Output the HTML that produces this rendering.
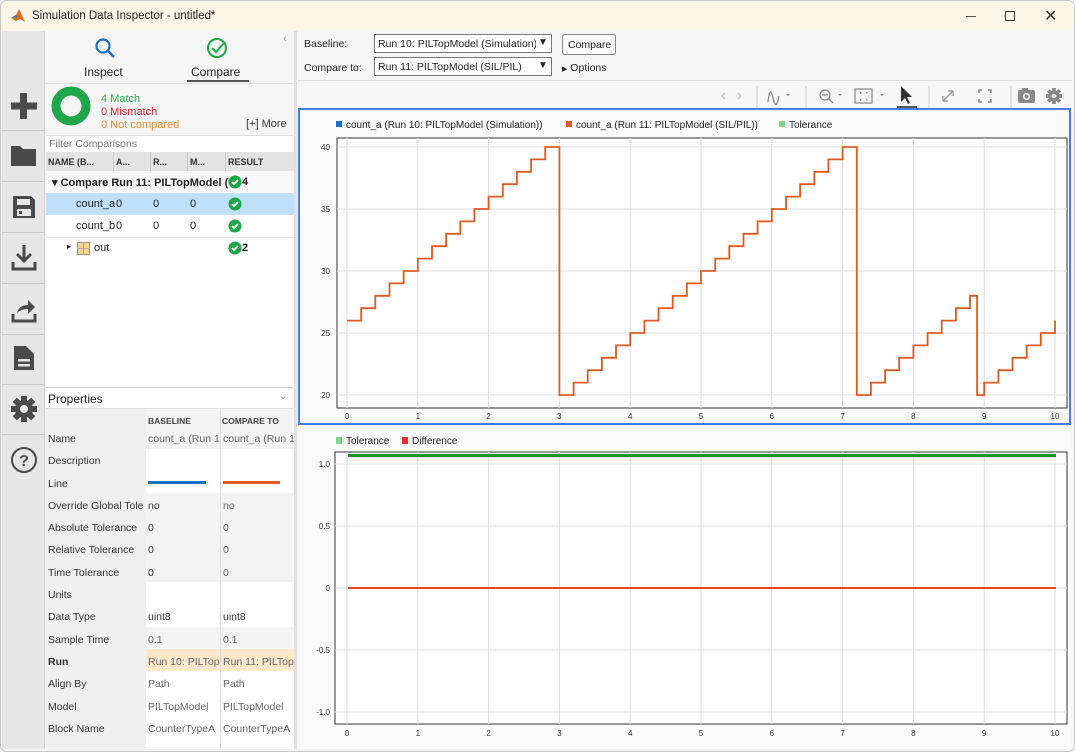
<!DOCTYPE html>
<html><head><meta charset="utf-8"><style>
*{margin:0;padding:0;box-sizing:border-box}
body{width:1075px;height:752px;overflow:hidden;background:#fff;font-family:"Liberation Sans",sans-serif;font-size:11px;color:#222;position:relative}
.a{position:absolute}
.t{position:absolute;white-space:nowrap}
</style></head><body>
<div class="a" style="left:0;top:0;width:1075px;height:752px;background:#f5f5f5;border:1px solid #c8c8c8;border-radius:6px"></div>
<div class="a" style="left:1px;top:1px;width:1073px;height:30px;background:#fbf7e8;border-radius:6px 6px 0 0"></div>
<svg class="a" style="left:10px;top:8px" width="16" height="16" viewBox="0 0 16 16"><path d="M1 10 L6 7 L9 1 L15 14 L10 11 L6 13Z" fill="#e26a1b"/><path d="M1 10 L6 7 L8 9Z" fill="#2e7cc0"/></svg>
<div class="t" style="left:32px;top:10px;font-size:11.5px;color:#222">Simulation Data Inspector - untitled*</div>
<div class="a" style="left:966px;top:16px;width:10px;height:1px;background:#555"></div>
<div class="a" style="left:1005px;top:11px;width:10px;height:10px;border:1.3px solid #333;border-radius:1px"></div>
<div class="t" style="left:1044px;top:6px;font-size:16px;color:#333">✕</div>

<div class="a" style="left:2px;top:31px;width:43px;height:718px;background:#e6e6e6;border-right:1px solid #d0d0d0"></div>
<div class="a" style="left:2px;top:130px;width:43px;height:1px;background:#c8c8c8"></div>
<div class="a" style="left:2px;top:181px;width:43px;height:1px;background:#c8c8c8"></div>
<div class="a" style="left:2px;top:232px;width:43px;height:1px;background:#c8c8c8"></div>
<div class="a" style="left:2px;top:283px;width:43px;height:1px;background:#c8c8c8"></div>
<div class="a" style="left:2px;top:334px;width:43px;height:1px;background:#c8c8c8"></div>
<div class="a" style="left:2px;top:384px;width:43px;height:1px;background:#c8c8c8"></div>
<div class="a" style="left:2px;top:434px;width:43px;height:1px;background:#c8c8c8"></div>
<svg class="a" style="left:9px;top:91px" width="30" height="30"><rect x="11" y="2" width="7" height="26" fill="#4a4a4a"/><rect x="2" y="11.5" width="26" height="7" fill="#4a4a4a"/></svg>
<svg class="a" style="left:9px;top:142px" width="30" height="26"><path d="M2 4 h9 l3 3 h13 v17 h-25z" fill="#4a4a4a"/></svg>
<svg class="a" style="left:11px;top:194px" width="26" height="26"><path d="M2 2 h18 l4 4 v18 h-22z" fill="#4a4a4a"/><rect x="6" y="5" width="13" height="6" fill="#e6e6e6"/><rect x="6" y="15" width="14" height="7" fill="#e6e6e6"/><rect x="8" y="17" width="3" height="3" fill="#4a4a4a"/></svg>
<svg class="a" style="left:10px;top:243px" width="28" height="30"><path d="M14 2 v16 M7 11 l7 7 l7 -7" stroke="#4a4a4a" stroke-width="3" fill="none"/><path d="M3 19 v7 h22 v-7" stroke="#4a4a4a" stroke-width="3" fill="none"/></svg>
<svg class="a" style="left:10px;top:295px" width="28" height="30"><path d="M7 18 q2 -8 11 -8 v-5 l7 7 l-7 7 v-5 q-7 0 -11 4z" fill="#4a4a4a"/><path d="M3 19 v7 h22 v-7" stroke="#4a4a4a" stroke-width="3" fill="none"/></svg>
<svg class="a" style="left:12px;top:344px" width="24" height="28"><path d="M2 2 h12 l8 8 v16 h-20z" fill="#4a4a4a"/><rect x="6" y="15" width="12" height="2.5" fill="#e6e6e6"/><rect x="6" y="20" width="12" height="2.5" fill="#e6e6e6"/></svg>
<svg class="a" style="left:10px;top:395px" width="28" height="28" viewBox="0 0 28 28"><g fill="#4a4a4a"><circle cx="14" cy="14" r="9"/><rect x="11" y="1" width="6" height="26"/><rect x="1" y="11" width="26" height="6"/><rect x="11" y="1" width="6" height="26" transform="rotate(45 14 14)"/><rect x="11" y="1" width="6" height="26" transform="rotate(-45 14 14)"/></g><circle cx="14" cy="14" r="4" fill="#e6e6e6"/></svg>
<svg class="a" style="left:10px;top:446px" width="28" height="28"><circle cx="14" cy="14" r="12" fill="none" stroke="#4a4a4a" stroke-width="2"/><text x="14" y="20" font-size="16" font-family="Liberation Sans" font-weight="bold" text-anchor="middle" fill="#4a4a4a">?</text></svg>

<div class="a" style="left:46px;top:31px;width:248px;height:718px;background:#f5f5f5"></div>
<svg class="a" style="left:93px;top:36px" width="24" height="24"><circle cx="10" cy="10" r="6.5" fill="none" stroke="#1a6fc0" stroke-width="2.2"/><path d="M15 15 l6 6" stroke="#1a6fc0" stroke-width="2.5"/></svg>
<svg class="a" style="left:206px;top:36px" width="24" height="24"><circle cx="11" cy="12" r="9" fill="none" stroke="#1fa64a" stroke-width="2"/><path d="M6 12 l4 4 l8 -9" fill="none" stroke="#1fa64a" stroke-width="2"/></svg>
<div class="t" style="left:84px;top:65px;font-size:12px">Inspect</div>
<div class="t" style="left:191px;top:65px;font-size:12px">Compare</div>
<div class="a" style="left:187px;top:80px;width:62px;height:2px;background:#555"></div>
<div class="t" style="left:283px;top:33px;font-size:11px;color:#999">‹</div>
<div class="a" style="left:46px;top:83px;width:248px;height:1px;background:#ddd"></div>
<svg class="a" style="left:51px;top:86px" width="40" height="40"><circle cx="20" cy="20" r="15" fill="none" stroke="#1fa64a" stroke-width="9"/></svg>
<div class="t" style="left:101px;top:93px;color:#2db34a">4 Match</div>
<div class="t" style="left:101px;top:106px;color:#f0202a">0 Mismatch</div>
<div class="t" style="left:101px;top:119px;color:#f08a30">0 Not compared</div>
<div class="t" style="left:246px;top:118px;color:#333">[+] More</div>
<div class="a" style="left:46px;top:135px;width:248px;height:17px;background:#fff;border-top:1px solid #ddd"></div>
<div class="t" style="left:49px;top:138px;color:#777;font-size:10.5px">Filter Comparisons</div>
<div class="a" style="left:46px;top:152px;width:248px;height:19px;background:#e3e3e3"></div>
<div class="t" style="left:48px;top:157px;font-size:9px;font-weight:bold;color:#333">NAME (B...</div>
<div class="t" style="left:116px;top:157px;font-size:9px;font-weight:bold;color:#333">A...</div>
<div class="t" style="left:153px;top:157px;font-size:9px;font-weight:bold;color:#333">R...</div>
<div class="t" style="left:190px;top:157px;font-size:9px;font-weight:bold;color:#333">M...</div>
<div class="t" style="left:228px;top:157px;font-size:9px;font-weight:bold;color:#333">RESULT</div>
<div class="a" style="left:113px;top:152px;width:1px;height:19px;background:#ccc"></div>
<div class="a" style="left:150px;top:152px;width:1px;height:19px;background:#ccc"></div>
<div class="a" style="left:187px;top:152px;width:1px;height:19px;background:#ccc"></div>
<div class="a" style="left:225px;top:152px;width:1px;height:107px;background:#ccc"></div>
<div class="a" style="left:46px;top:171px;width:248px;height:22px;background:#f8f8f8"></div>
<div class="t" style="left:52px;top:176px;font-weight:bold;font-size:11px">▾ Compare Run 11: PILTopModel (</div>
<div class="a" style="left:46px;top:193px;width:248px;height:22px;background:#bfe0fb"></div>
<div class="a" style="left:46px;top:215px;width:248px;height:22px;background:#fff"></div>
<div class="a" style="left:46px;top:237px;width:248px;height:22px;background:#fff;border-top:1px solid #e8e8e8"></div>
<div class="t" style="left:76px;top:198px">count_a</div><div class="t" style="left:116px;top:198px">0</div><div class="t" style="left:153px;top:198px">0</div><div class="t" style="left:190px;top:198px">0</div>
<div class="t" style="left:76px;top:220px">count_b</div><div class="t" style="left:116px;top:220px">0</div><div class="t" style="left:153px;top:220px">0</div><div class="t" style="left:190px;top:220px">0</div>
<div class="t" style="left:67px;top:242px;font-size:8px">▸</div>
<svg class="a" style="left:77px;top:242px" width="13" height="13"><rect x="0.5" y="0.5" width="12" height="12" fill="#f5d58a" stroke="#999"/><path d="M6.5 0 v13 M0 6.5 h13" stroke="#aaa"/></svg>
<div class="t" style="left:94px;top:242px">out</div>
<svg class="a" style="left:227px;top:175px" width="70" height="85"><g fill="#1fa64a"><circle cx="8" cy="7" r="6.5"/><circle cx="8" cy="29" r="6.5"/><circle cx="8" cy="51" r="6.5"/><circle cx="8" cy="73" r="6.5"/></g><g fill="none" stroke="#fff" stroke-width="1.8"><path d="M5 7 l2 2 l4 -4"/><path d="M5 29 l2 2 l4 -4"/><path d="M5 51 l2 2 l4 -4"/><path d="M5 73 l2 2 l4 -4"/></g></svg>
<div class="t" style="left:242px;top:176px;font-weight:bold">4</div>
<div class="t" style="left:242px;top:242px;font-weight:bold">2</div>
<div class="a" style="left:46px;top:259px;width:248px;height:128px;background:#fff"></div>

<div class="a" style="left:46px;top:387px;width:248px;height:22px;background:#fff;border-top:1px solid #ccc;border-bottom:1px solid #ddd"></div>
<div class="t" style="left:48px;top:392px;font-size:12px">Properties</div>
<div class="t" style="left:279px;top:391px;font-size:10px;color:#999">⌄</div>
<div class="a" style="left:46px;top:409px;width:100px;height:340px;background:#efefef"></div>
<div class="a" style="left:146px;top:409px;width:148px;height:340px;background:#fff"></div>
<div class="a" style="left:146px;top:409px;width:148px;height:18px;background:#f3f3f3"></div>
<div class="t" style="left:148px;top:416px;font-size:8.5px;font-weight:bold;color:#444">BASELINE</div>
<div class="t" style="left:222px;top:416px;font-size:8.5px;font-weight:bold;color:#444">COMPARE TO</div>
<div class="a" style="left:146px;top:427px;width:148px;height:22px;background:#f3f3f3"></div>
<div class="a" style="left:146px;top:493px;width:148px;height:89px;background:#f3f3f3"></div>
<div class="a" style="left:146px;top:627px;width:148px;height:22px;background:#f3f3f3"></div>
<div class="a" style="left:146px;top:649px;width:148px;height:22px;background:#fde8c9"></div>
<div class="a" style="left:220px;top:409px;width:1px;height:340px;background:#ddd"></div>
<div class="a" style="left:148px;top:481px;width:58px;height:3px;background:#1a72c0"></div>
<div class="a" style="left:223px;top:481px;width:57px;height:3px;background:#e05a20"></div>
<div style="position:absolute;left:48px;top:428px;line-height:22.3px;font-size:10.5px;color:#333">Name<br>Description<br>Line<br>Override Global Tole<br>Absolute Tolerance<br>Relative Tolerance<br>Time Tolerance<br>Units<br>Data Type<br>Sample Time<br><b>Run</b><br>Align By<br>Model<br>Block Name</div>
<div style="position:absolute;left:148px;top:428px;width:72px;overflow:hidden;white-space:nowrap;line-height:22.3px;font-size:10.5px;color:#666">count_a (Run 10<br><br><br><span style="color:#333">no</span><br><span style="color:#333">0</span><br><span style="color:#333">0</span><br><span style="color:#333">0</span><br><br><span style="color:#333">uint8</span><br>0.1<br>Run 10: PILTopModel<br>Path<br>PILTopModel<br>CounterTypeA</div>
<div style="position:absolute;left:223px;top:428px;width:71px;overflow:hidden;white-space:nowrap;line-height:22.3px;font-size:10.5px;color:#666">count_a (Run 11<br><br><br>no<br>0<br>0<br>0<br><br><span style="color:#333">uint8</span><br>0.1<br>Run 11: PILTopModel<br>Path<br>PILTopModel<br>CounterTypeA</div>

<div class="a" style="left:294px;top:31px;width:3px;height:718px;background:#e0e0e0"></div>

<div class="a" style="left:297px;top:31px;width:775px;height:50px;background:#f5f5f5;border-bottom:1px solid #ddd"></div>
<div class="t" style="left:304px;top:38px;font-size:10.5px">Baseline:</div>
<div class="t" style="left:304px;top:62px;font-size:10.5px">Compare to:</div>
<div class="a" style="left:374px;top:34px;width:178px;height:19px;background:#fff;border:1px solid #777"></div>
<div class="t" style="left:378px;top:38px;font-size:10.5px">Run 10: PILTopModel (Simulation)</div>
<div class="a" style="left:536px;top:35px;width:15px;height:17px;background:#fff"></div>
<div class="t" style="left:538px;top:37px;font-size:10px">▼</div>
<div class="a" style="left:374px;top:57px;width:178px;height:19px;background:#fff;border:1px solid #777"></div>
<div class="t" style="left:378px;top:61px;font-size:10.5px">Run 11: PILTopModel (SIL/PIL)</div>
<div class="t" style="left:538px;top:60px;font-size:10px">▼</div>
<div class="a" style="left:562px;top:34px;width:54px;height:21px;background:#fbfbfb;border:1px solid #888;border-radius:3px"></div>
<div class="t" style="left:568px;top:39px;font-size:10.5px">Compare</div>
<div class="t" style="left:562px;top:62px;font-size:10.5px"><span style="font-size:7px">▶</span> Options</div>

<div class="a" style="left:297px;top:82px;width:775px;height:26px;background:#f7f7f7"></div>
<svg class="a" style="left:700px;top:80px" width="375" height="30">
<g stroke="#bbb" fill="none" stroke-width="1.2"><path d="M25 13 l-3 3 l3 3"/><path d="M38 13 l3 3 l-3 3"/></g>
<g stroke="#ccc"><path d="M57 6 v22"/><path d="M106 6 v22"/><path d="M229 6 v22"/><path d="M311 6 v22"/></g>
<path d="M68 22 q2 -18 5 -4 q3 14 6 -2" stroke="#888" fill="none" stroke-width="1.3"/><path d="M86 14 l2 2 l2 -2z" fill="#888"/>
<circle cx="125" cy="15" r="5" stroke="#888" fill="none" stroke-width="1.3"/><path d="M129 19 l4 4 M122 15 h6" stroke="#888" stroke-width="1.3"/><path d="M138 14 l2 2 l2 -2z" fill="#888"/>
<rect x="155" y="9" width="17" height="14" stroke="#888" fill="none" stroke-width="1.2"/><g fill="#888"><rect x="160" y="12" width="1.5" height="1.5"/><rect x="166" y="12" width="1.5" height="1.5"/><rect x="160" y="19" width="1.5" height="1.5"/><rect x="166" y="19" width="1.5" height="1.5"/></g><path d="M180 14 l2 2 l2 -2z" fill="#888"/>
<path d="M201 6 v16 l4 -4 l3 6 l2 -1 l-3 -6 h5z" fill="#333"/><rect x="197" y="26" width="20" height="2" fill="#555"/>
<path d="M243 21 l10 -10 M243 21 v-5 M243 21 h5 M253 11 h-5 M253 11 v5" stroke="#999" fill="none" stroke-width="1.3"/>
<path d="M282 10 h-3 v3 M288 10 h3 v3 M282 22 h-3 v-3 M288 22 h3 v-3" stroke="#888" fill="none" stroke-width="1.5"/>
<rect x="318" y="10" width="17" height="13" rx="2" fill="#888"/><rect x="322" y="8" width="6" height="3" fill="#888"/><circle cx="326.5" cy="16.5" r="3.5" fill="#f7f7f7"/><circle cx="326.5" cy="16.5" r="2" fill="#888"/>
<g transform="translate(354 16)" fill="#888"><circle r="5.5"/><rect x="-1.8" y="-8" width="3.6" height="16"/><rect x="-8" y="-1.8" width="16" height="3.6"/><rect x="-1.8" y="-8" width="3.6" height="16" transform="rotate(45)"/><rect x="-1.8" y="-8" width="3.6" height="16" transform="rotate(-45)"/><circle r="2.3" fill="#f7f7f7"/></g>
</svg>

<svg class="a" style="left:0;top:0" width="1075" height="752" font-family="Liberation Sans">
<rect x="297" y="108" width="775" height="641" fill="#f7f7f7"/>
<rect x="299" y="109" width="771" height="315" fill="#fafafa" stroke="#4a7ae8" stroke-width="2"/>
<rect x="337" y="138" width="730" height="270" fill="#fff" stroke="#333" stroke-width="1"/>
<g stroke="#ddd" stroke-width="1">
<path d="M347 138V408M417.8 138V408M488.6 138V408M559.4 138V408M630.2 138V408M701 138V408M771.8 138V408M842.6 138V408M913.4 138V408M984.2 138V408M1055 138V408"/>
<path d="M337 147H1067M337 209H1067M337 271H1067M337 333H1067M337 395H1067"/>
</g>
<g font-size="8" fill="#333" text-anchor="middle">
<text x="347" y="419">0</text><text x="417.8" y="419">1</text><text x="488.6" y="419">2</text><text x="559.4" y="419">3</text><text x="630.2" y="419">4</text><text x="701" y="419">5</text><text x="771.8" y="419">6</text><text x="842.6" y="419">7</text><text x="913.4" y="419">8</text><text x="984.2" y="419">9</text><text x="1055" y="419">10</text>
</g>
<g font-size="8" fill="#333" text-anchor="end">
<text x="330" y="150">40</text><text x="330" y="212">35</text><text x="330" y="274">30</text><text x="330" y="336">25</text><text x="330" y="398">20</text>
</g>
<path d="M347 320.6 H361.2 V308.2 H375.3 V295.8 H389.5 V283.4 H403.6 V271 H417.8 V258.6 H432 V246.2 H446.1 V233.8 H460.3 V221.4 H474.4 V209 H488.6 V196.6 H502.8 V184.2 H516.9 V171.8 H531.1 V159.4 H545.2 V147 H559.4 V395 H573.6 V382.6 H587.7 V370.2 H601.9 V357.8 H616 V345.4 H630.2 V333 H644.4 V320.6 H658.5 V308.2 H672.7 V295.8 H686.8 V283.4 H701 V271 H715.2 V258.6 H729.3 V246.2 H743.5 V233.8 H757.6 V221.4 H771.8 V209 H786 V196.6 H800.1 V184.2 H814.3 V171.8 H828.4 V159.4 H842.6 V147 H856.8 V395 H870.9 V382.6 H885.1 V370.2 H899.2 V357.8 H913.4 V345.4 H927.6 V333 H941.7 V320.6 H955.9 V308.2 H970 V295.8 H977.1 V395 H984.2 V382.6 H998.4 V370.2 H1012.5 V357.8 H1026.7 V345.4 H1040.8 V333 H1055 V320.6" fill="none" stroke="#e05a20" stroke-width="1.8"/>
<g font-size="10" fill="#222">
<rect x="336" y="121" width="6" height="6" fill="#1a72c0"/><text x="346" y="128">count_a (Run 10: PILTopModel (Simulation))</text>
<rect x="566" y="121" width="6" height="6" fill="#e05a20"/><text x="576" y="128">count_a (Run 11: PILTopModel (SIL/PIL))</text>
<rect x="779" y="121" width="6" height="6" fill="#7ed68a"/><text x="789" y="128">Tolerance</text>
</g>
<rect x="298" y="426" width="773" height="322" fill="#fafafa"/>
<rect x="335" y="452" width="732" height="272" fill="#fff" stroke="#333"/>
<g stroke="#ddd">
<path d="M347 452V724M417.8 452V724M488.6 452V724M559.4 452V724M630.2 452V724M701 452V724M771.8 452V724M842.6 452V724M913.4 452V724M984.2 452V724M1055 452V724"/>
<path d="M335 464H1067M335 526H1067M335 588H1067M335 650H1067M335 712H1067"/>
</g>
<path d="M348 455.5H1056" stroke="#1f8f2e" stroke-width="3"/>
<path d="M348 588H1056" stroke="#f04030" stroke-width="2"/>
<g font-size="8" fill="#333" text-anchor="middle">
<text x="347" y="736">0</text><text x="417.8" y="736">1</text><text x="488.6" y="736">2</text><text x="559.4" y="736">3</text><text x="630.2" y="736">4</text><text x="701" y="736">5</text><text x="771.8" y="736">6</text><text x="842.6" y="736">7</text><text x="913.4" y="736">8</text><text x="984.2" y="736">9</text><text x="1055" y="736">10</text>
</g>
<g font-size="8" fill="#333" text-anchor="end">
<text x="330" y="467">1.0</text><text x="330" y="529">0.5</text><text x="330" y="591">0</text><text x="330" y="653">-0.5</text><text x="330" y="715">-1.0</text>
</g>
<g font-size="10" fill="#222">
<rect x="336" y="437" width="6" height="7" fill="#7ed68a"/><text x="346" y="444">Tolerance</text>
<rect x="402" y="437" width="6" height="7" fill="#f03020"/><text x="412" y="444">Difference</text>
</g>
</svg>
</body></html>
